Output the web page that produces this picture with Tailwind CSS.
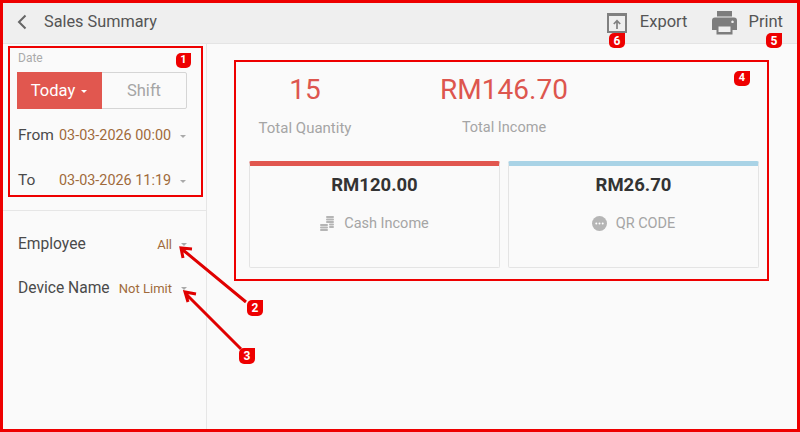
<!DOCTYPE html>
<html lang="en">
<head>
    <meta charset="UTF-8">
    <title>Sales Summary</title>
    <script src="https://cdn.jsdelivr.net/npm/@tailwindcss/browser@4"></script>
</head>
<body class="bg-[#fafafa] font-['Roboto',sans-serif]">
    <div class="relative w-[800px] h-[432px] overflow-hidden flex flex-col text-[#4a4a4a]">
        <!-- header -->
        <header class="h-[44px] shrink-0 bg-[#efefef] border-b border-[#e4e4e4] flex items-center pl-[17px] pt-[2px]">
            <svg class="w-[10px] h-[16px] mb-[2px]" viewBox="0 0 10 16" fill="none" stroke="#666" stroke-width="2"><path d="M8.5 1.5 2 8l6.500 6.500"/></svg>
            <span class="ml-[17px] text-[16.3px] text-[#555]">Sales Summary</span>
            <div class="ml-auto flex items-center text-[#555] text-[16.5px]">
                <svg class="w-[20px] h-[21px]" viewBox="0 0 20 21" fill="none" stroke="#808080" stroke-width="2"><path d="M1 20V2h18v18z"/><path d="M0 2.500h20" stroke-width="3"/><path d="M10 17V9M6.800 12l3.200-3.300 3.200 3.300" stroke-width="1.700"/></svg>
                <span class="ml-[13px]">Export</span>
                <svg class="ml-[25px] w-[25px] h-[24px]" viewBox="0 0 25 24" fill="#7d7d7d"><path d="M5 0h15v5.500H5z"/><path fill-rule="evenodd" d="M3 6.500h19a3 3 0 0 1 3 3V19h-4.500v4.500h-16V19H0V9.500a3 3 0 0 1 3-3zM6.500 15.500V21h12v-5.500zM20.500 9.500a1.300 1.300 0 1 0 .01 0z"/></svg>
                <span class="ml-[11px] mr-[17px]">Print</span>
            </div>
        </header>
        <div class="flex flex-1 min-h-0">
            <!-- sidebar -->
            <aside class="w-[207px] shrink-0 border-r border-[#e6e6e6]">
                <div class="h-[167px] border-b border-[#e6e6e6] pl-[18px] pr-[19px] pt-[7px]">
                    <div class="text-[12px] leading-[14px] text-[#aaa]">Date</div>
                    <div class="mt-[7px] flex h-[37px] rounded-[2px] border border-[#d5d5d5] text-[16.5px] -ml-px">
                        <div class="w-[85px] bg-[#e1574f] text-white flex items-center justify-center -my-px -ml-px pr-[1px] pt-[2px]">Today<span class="ml-[6px] border-x-[3.5px] border-t-[3.5px] border-x-transparent border-t-white"></span></div>
                        <div class="flex-1 flex items-center justify-center text-[#a5a5a5] pt-[2px]">Shift</div>
                    </div>
                    <div class="mt-[15px] h-[24px] flex items-center text-[15.5px]">
                        <span class="w-[41px]">From</span>
                        <span class="text-[14.4px] text-[#a06a3a]">03-03-2026 00:00</span>
                        <span class="ml-auto mr-[1px] border-x-[3.5px] border-t-[3.5px] border-x-transparent border-t-[#aaa]"></span>
                    </div>
                    <div class="mt-[21px] h-[24px] flex items-center text-[15.5px]">
                        <span class="w-[41px]">To</span>
                        <span class="text-[14.4px] text-[#a06a3a]">03-03-2026 11:19</span>
                        <span class="ml-auto mr-[1px] border-x-[3.5px] border-t-[3.5px] border-x-transparent border-t-[#aaa]"></span>
                    </div>
                </div>
                <div class="pl-[18px] pr-[19px] pt-[22px]">
                    <div class="h-[24px] flex items-center text-[15.6px]">
                        <span>Employee</span>
                        <span class="ml-auto text-[13px] text-[#a06a3a]">All</span>
                        <span class="ml-[9px] mb-[2px] border-x-[3.5px] border-t-[3.5px] border-x-transparent border-t-[#aaa]"></span>
                    </div>
                    <div class="mt-[20px] h-[24px] flex items-center text-[15.6px]">
                        <span>Device Name</span>
                        <span class="ml-auto text-[13px] text-[#a06a3a]">Not Limit</span>
                        <span class="ml-[9px] mb-[2px] border-x-[3.5px] border-t-[3.5px] border-x-transparent border-t-[#aaa]"></span>
                    </div>
                </div>
            </aside>
            <!-- summary -->
            <main class="flex-1 pl-[42px] pr-[41px] pt-[26px]">
                <div class="flex">
                    <div class="w-[112px] text-center">
                        <div class="text-[28px] leading-[39px] text-[#dd564e]">15</div>
                        <div class="mt-[10px] text-[15px] leading-[18px] text-[#a5a5a5] whitespace-nowrap">Total Quantity</div>
                    </div>
                    <div class="ml-[75px] w-[136px] flex flex-col items-center">
                        <div class="text-[28px] leading-[39px] text-[#dd564e] whitespace-nowrap">RM146.70</div>
                        <div class="mt-[10px] text-[14.5px] leading-[18px] text-[#a5a5a5] whitespace-nowrap">Total Income</div>
                    </div>
                </div>
                <div class="mt-[24px] grid grid-cols-2 gap-[8px]">
                    <div class="h-[107px] rounded-[2px] border border-[#e4e4e4] border-t-[5px] border-t-[#e1574f] flex flex-col items-center">
                        <div class="mt-[7px] text-[18.5px] leading-[24px] font-bold text-[#333]">RM120.00</div>
                        <div class="mt-[18px] flex items-center text-[14.5px] leading-[18px] text-[#a5a5a5]">
                            <svg class="w-[14px] h-[15px] mb-[2px]" viewBox="0 0 14 15" fill="#b5b5b5"><rect x="0" y="8" width="8" height="2" rx="1"/><rect x="0" y="10.500" width="8" height="2" rx="1"/><rect x="0" y="13" width="8" height="2" rx="1"/><rect x="6" y="0" width="8" height="2" rx="1"/><rect x="6" y="2.500" width="8" height="2" rx="1"/><rect x="6" y="5" width="8" height="2" rx="1"/><rect x="9" y="7.500" width="5" height="2" rx="1"/><rect x="9" y="10" width="5" height="2" rx="1"/></svg>
                            <span class="ml-[10px]">Cash Income</span>
                        </div>
                    </div>
                    <div class="h-[107px] rounded-[2px] border border-[#e4e4e4] border-t-[5px] border-t-[#a9d3e6] flex flex-col items-center">
                        <div class="mt-[7px] text-[18.5px] leading-[24px] font-bold text-[#333]">RM26.70</div>
                        <div class="mt-[18px] flex items-center text-[14.5px] leading-[18px] text-[#a5a5a5]">
                            <svg class="w-[15px] h-[15px] mb-[2px]" viewBox="0 0 15 15"><circle cx="7.500" cy="7.500" r="7.500" fill="#b5b5b5"/><circle cx="4.300" cy="7.500" r="1" fill="#fff"/><circle cx="7.500" cy="7.500" r="1" fill="#fff"/><circle cx="10.700" cy="7.500" r="1" fill="#fff"/></svg>
                            <span class="ml-[9px]">QR CODE</span>
                        </div>
                    </div>
                </div>
            </main>
        </div>

        <!-- annotations over the screenshot -->
        <div class="absolute inset-0 border-[3px] border-[#ee0000]"></div>
        <div class="absolute left-[8px] top-[46px] w-[195px] h-[151px] border-2 border-[#ee0000]"></div>
        <div class="absolute left-[234px] top-[60px] w-[535px] h-[221px] border-2 border-[#ee0000]"></div>
        <svg class="absolute inset-0" width="800" height="432" fill="none" stroke="#e00000" stroke-width="3">
            <path d="M246 302 183 250M183 258l-2-10 11 1"/>
            <path d="M241 349 186 294M188 302l-3-10 11 2"/>
        </svg>
        <div class="absolute left-[176px] top-[53px] w-[15px] h-[15px] rounded-[5px] rounded-tr-none bg-[#ee0000] text-white text-[11px] font-bold flex items-center justify-center">1</div>
        <div class="absolute left-[247px] top-[300px] w-[16px] h-[16px] rounded-[5px] rounded-tr-none bg-[#ee0000] text-white text-[12px] font-bold flex items-center justify-center">2</div>
        <div class="absolute left-[239px] top-[348px] w-[16px] h-[16px] rounded-[5px] rounded-tr-none bg-[#ee0000] text-white text-[12px] font-bold flex items-center justify-center">3</div>
        <div class="absolute left-[734px] top-[71px] w-[16px] h-[15px] rounded-[5px] rounded-tr-none bg-[#ee0000] text-white text-[11px] font-bold flex items-center justify-center">4</div>
        <div class="absolute left-[766px] top-[33px] w-[16px] h-[15px] rounded-[5px] rounded-tr-none bg-[#ee0000] text-white text-[12px] font-bold flex items-center justify-center">5</div>
        <div class="absolute left-[609px] top-[33px] w-[16px] h-[15px] rounded-[5px] rounded-tr-none bg-[#ee0000] text-white text-[12px] font-bold flex items-center justify-center">6</div>
    </div>
</body>
</html>
